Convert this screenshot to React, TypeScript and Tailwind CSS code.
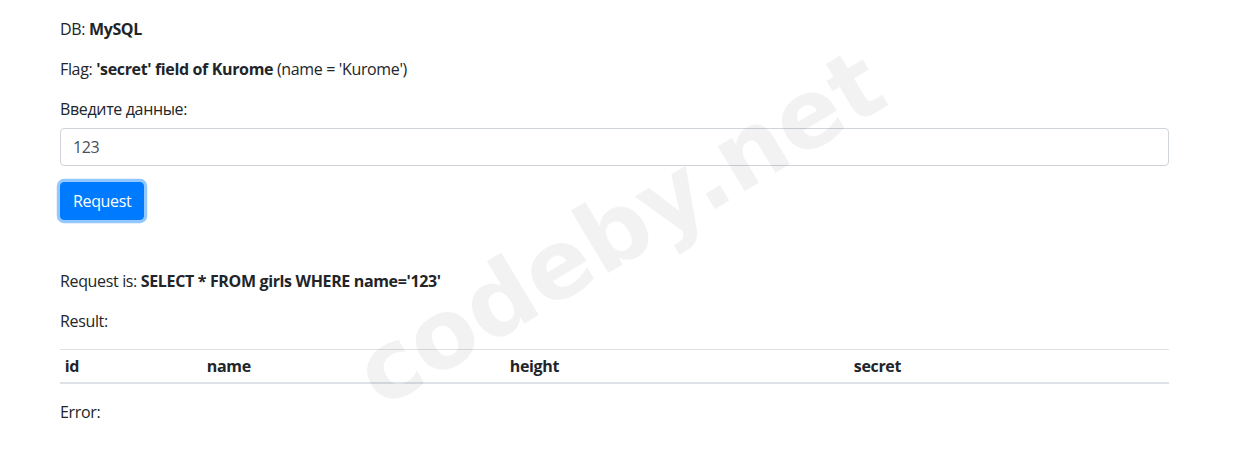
import React from "react";

export default function App() {
  return (
    <div className="relative min-h-[471px] bg-white text-[#212529] text-[16px] leading-[24px] tracking-[-0.35px]" style={{ fontFamily: '"Open Sans", "Noto Sans", sans-serif' }}>
      <div className="ml-[60px] w-[1109px] pt-[17px]">
        <p className="mb-4">
          DB: <b className="font-bold">MySQL</b>
        </p>
        <p className="mb-4">
          Flag: <b className="font-bold">'secret' field of Kurome</b> (name = 'Kurome')
        </p>
        <div className="mb-4">
          <label className="block mb-[7px]">Введите данные:</label>
          <input
            readOnly
            value="123"
            className="block w-full h-[38px] px-3 py-[6px] border border-[#ced4da] rounded-[4px] text-[#495057] bg-white outline-none tracking-[-0.35px]"
          />
        </div>
        <button className="h-[38px] px-3 rounded-[4px] border border-[#007bff] bg-[#007bff] text-white shadow-[0_0_0_3.2px_rgba(38,143,255,0.5)] tracking-[-0.35px]">
          Request
        </button>
        <p className="mt-[49px] mb-4">
          Request is: <b className="font-bold">SELECT * FROM girls WHERE name='123'</b>
        </p>
        <p className="mb-4">Result:</p>
        <table className="w-full mb-4 border-collapse">
          <thead>
            <tr>
              <th className="w-[142px] text-left font-bold px-[4.8px] py-[4px] border-t border-[#dee2e6] border-b-2">id</th>
              <th className="w-[303px] text-left font-bold px-[4.8px] py-[4px] border-t border-[#dee2e6] border-b-2">name</th>
              <th className="w-[344px] text-left font-bold px-[4.8px] py-[4px] border-t border-[#dee2e6] border-b-2">height</th>
              <th className="text-left font-bold px-[4.8px] py-[4px] border-t border-[#dee2e6] border-b-2">secret</th>
            </tr>
          </thead>
          <tbody></tbody>
        </table>
        <p>Error:</p>
      </div>
      <div className="pointer-events-none absolute inset-0 flex items-center justify-center overflow-hidden">
        <span
          className="-translate-y-[8px] -rotate-[31deg] text-[96px] font-bold text-black/5 leading-none select-none tracking-normal"
          style={{ fontFamily: '"DejaVu Sans", sans-serif' }}
        >
          codeby.net
        </span>
      </div>
    </div>
  );
}
